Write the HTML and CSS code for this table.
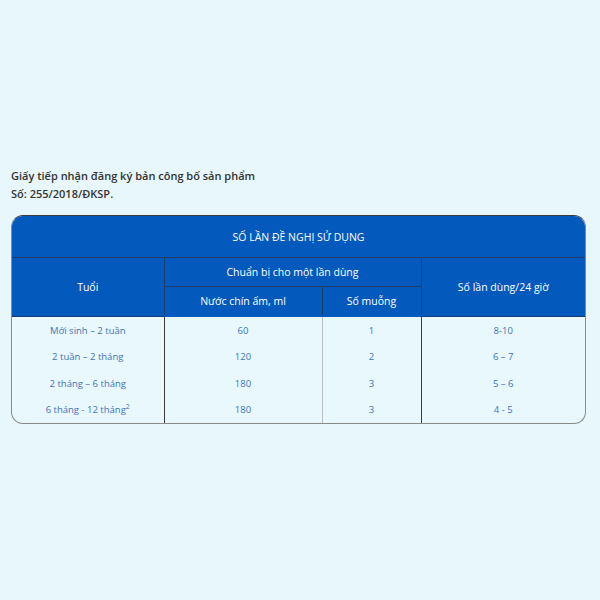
FILE: index.html
```html
<!DOCTYPE html>
<html lang="vi">
<head>
<meta charset="utf-8">
<link rel="stylesheet" href="styles.css">
</head>
<body>
<div class="page">
  <div class="intro">
    <p>Giấy tiếp nhận đăng ký bản công bố sản phẩm</p>
    <p>Số: 255/2018/ĐKSP.</p>
  </div>
  <div class="card">
    <table class="usage">
      <colgroup>
        <col class="c1"><col class="c2"><col class="c3"><col class="c4">
      </colgroup>
      <thead>
        <tr class="r-title"><th colspan="4">SỐ LẦN ĐỀ NGHỊ SỬ DỤNG</th></tr>
        <tr class="r-sub"><th rowspan="2" class="bl0">Tuổi</th><th colspan="2">Chuẩn bị cho một lần dùng</th><th rowspan="2" class="br0">Số lần dùng/24 giờ</th></tr>
        <tr class="r-sub"><th>Nước chín ấm, ml</th><th>Số muỗng</th></tr>
      </thead>
      <tbody>
        <tr><td>Mới sinh – 2 tuần</td><td class="light">60</td><td>1</td><td>8-10</td></tr>
        <tr><td>2 tuần – 2 tháng</td><td class="light">120</td><td>2</td><td>6 – 7</td></tr>
        <tr><td>2 tháng – 6 tháng</td><td class="light">180</td><td>3</td><td>5 – 6</td></tr>
        <tr><td>6 tháng - 12 tháng<sup>2</sup></td><td class="light">180</td><td>3</td><td>4 - 5</td></tr>
      </tbody>
    </table>
  </div>
</div>
</body>
</html>
```

FILE: styles.css
```css
html, body {
  margin: 0;
  padding: 0;
  background: #e7f7fc;
  width: 600px;
  height: 600px;
  overflow: hidden;
}
.page {
  padding: 167px 14px 0 11px;
  font-family: "Open Sans", "Noto Sans", sans-serif;
}
.intro p {
  margin: 0;
  font-size: 11px;
  font-weight: 600;
  color: #333;
  line-height: 18px;
}
.card {
  margin-top: 12px;
  width: 573px;
  border: 1px solid #8a8a8a;
  border-top-color: #3a3a3a;
  border-radius: 12px;
  overflow: hidden;
  background: #e9f8fd;
}
.usage {
  width: 100%;
  border-collapse: collapse;
  table-layout: fixed;
}
.c1 { width: 152px; }
.c2 { width: 158px; }
.c3 { width: 99px; }
.c4 { width: 164px; }
.usage th {
  background: #0459bd;
  color: #fff;
  font-weight: 400;
  font-size: 10.5px;
  border: 1px solid #1b3c6e;
  padding: 0;
}
.r-title th {
  height: 41px;
  border-top: none;
  border-left: none;
  border-right: none;
}
.r-sub th { height: 28px; }
.bl0 { border-left: none !important; }
.br0 { border-right: none !important; }
.usage thead tr:last-child th { border-bottom: 2px solid #0459bd; }
.usage td {
  height: 26.5px;
  padding: 0;
  text-align: center;
  font-size: 9.5px;
  color: #3f72b8;
  border-left: 1px solid #3d3d3d;
}
.usage td:first-child { border-left: none; }
.usage td.light + td { border-left: 1px solid #b8bfc4; }
.usage sup { font-size: 7px; line-height: 0; }
```
